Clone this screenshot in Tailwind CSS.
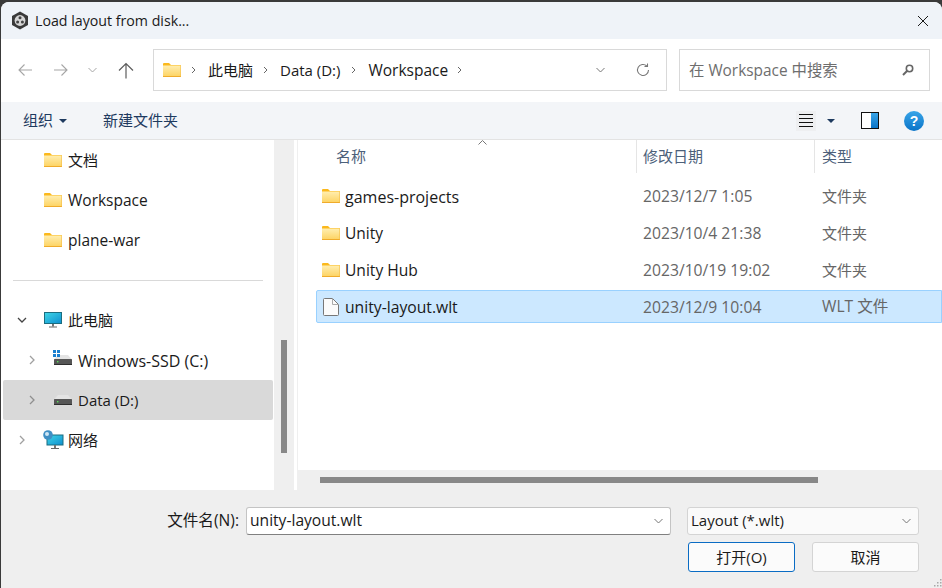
<!DOCTYPE html>
<html lang="zh-CN">
<head>
  <meta charset="UTF-8">
  <title>Load layout from disk...</title>
  <script src="https://cdn.jsdelivr.net/npm/@tailwindcss/browser@4"></script>
</head>
<body class="bg-[#3a3a3a] overflow-hidden font-['Open_Sans','Noto_Sans_CJK_SC',sans-serif] text-[15px] text-[#1a1a1a]">

  <!-- shared icons -->
  <svg width="0" height="0" class="absolute">
    <defs>
      <linearGradient id="folderFill" x1="0" y1="0" x2="0" y2="1">
        <stop offset="0" stop-color="#ffeeb0"/>
        <stop offset="1" stop-color="#fdd25f"/>
      </linearGradient>
      <linearGradient id="screenFill" x1="0" y1="0" x2="1" y2="1">
        <stop offset="0" stop-color="#3fd6e6"/>
        <stop offset="1" stop-color="#0f8fd0"/>
      </linearGradient>
      <linearGradient id="paneFill" x1="0" y1="0" x2="0" y2="1">
        <stop offset="0" stop-color="#39a5e8"/>
        <stop offset="1" stop-color="#0a74c8"/>
      </linearGradient>
      <symbol id="folder" viewBox="0 0 18 14">
        <path d="M0 1a1 1 0 0 1 1-1h5l2 2h10v2H0z" fill="#fbb81c"/>
        <rect x="0" y="2.5" width="18" height="11.5" fill="url(#folderFill)"/>
        <rect x="0" y="13" width="18" height="1" fill="#f0ab2a"/>
        <rect x="17.4" y="2.5" width="0.6" height="11" fill="#f5c04a"/>
      </symbol>
      <symbol id="drive" viewBox="0 0 18 10">
        <path d="M4 0h10l4 4.5H0z" fill="#e4e4e4"/>
        <rect x="0" y="4" width="18" height="6" rx="0.5" fill="#565656"/>
        <rect x="0" y="9" width="18" height="1" fill="#2f2f2f"/>
        <rect x="3" y="6" width="1.4" height="1.4" fill="#5ce05c"/>
      </symbol>
    </defs>
  </svg>

  <div class="w-[942px] h-[588px] pt-[2px] pl-[1px]">
    <div class="w-[941px] h-[586px] rounded-t-lg overflow-hidden flex flex-col bg-white">

      <!-- Title bar -->
      <div class="h-[37px] shrink-0 bg-[#eff3f8] flex items-center pl-[10px]">
        <svg width="18" height="19" viewBox="0 0 18 19" class="shrink-0">
          <path d="M9 .5l8 4.500v9l-8 4.500-8-4.500V5z" fill="#3a3a3a"/>
          <circle cx="9" cy="9.500" r="5.400" fill="#d6d6d6"/>
          <circle cx="9" cy="6.800" r="1.500" fill="#444"/>
          <circle cx="6.600" cy="11" r="1.500" fill="#444"/>
          <circle cx="11.400" cy="11" r="1.500" fill="#444"/>
        </svg>
        <span class="ml-[6px] text-[14.2px]">Load layout from disk...</span>
        <svg width="12" height="12" viewBox="0 0 12 12" class="ml-auto mr-[13px]" fill="none" stroke="#1a1a1a" stroke-width="1">
          <path d="M1 1l10 10M11 1L1 11"/>
        </svg>
      </div>

      <!-- Navigation row -->
      <div class="h-[63px] shrink-0 bg-white flex items-center pl-[16px] pb-[1px]">
        <svg width="16" height="14" viewBox="0 0 16 14" fill="none" stroke="#a6a6a6" stroke-width="1.1"><path d="M15 7H2M7.500 1.500L2 7l5.500 5.500"/></svg>
        <svg width="16" height="14" viewBox="0 0 16 14" fill="none" stroke="#a6a6a6" stroke-width="1.1" class="ml-[20px]"><path d="M1 7h13M8.500 1.500L14 7l-5.500 5.500"/></svg>
        <svg width="9" height="6" viewBox="0 0 9 6" fill="none" stroke="#a6a6a6" stroke-width="1" class="ml-[19px]"><path d="M.5 1l4 4 4-4"/></svg>
        <svg width="16" height="17" viewBox="0 0 16 17" fill="none" stroke="#5c5c5c" stroke-width="1.2" class="ml-[21px]"><path d="M8 16.500V1.500M1 8.500l7-7 7 7"/></svg>

        <div class="ml-[19px] w-[514px] h-[42px] border border-[#d9d9d9] flex items-center pl-[9px]">
          <svg width="18" height="14" viewBox="0 0 18 14" class="shrink-0"><use href="#folder"/></svg>
          <svg width="5" height="8" viewBox="0 0 5 8" fill="none" stroke="#666" stroke-width="1" class="ml-[10px]"><path d="M1 1l3 3-3 3"/></svg>
          <span class="ml-[12px]">此电脑</span>
          <svg width="5" height="8" viewBox="0 0 5 8" fill="none" stroke="#666" stroke-width="1" class="ml-[10px]"><path d="M1 1l3 3-3 3"/></svg>
          <span class="ml-[12px]">Data (D:)</span>
          <svg width="5" height="8" viewBox="0 0 5 8" fill="none" stroke="#666" stroke-width="1" class="ml-[11px]"><path d="M1 1l3 3-3 3"/></svg>
          <span class="ml-[12px] text-[15.5px] pt-[1px]">Workspace</span>
          <svg width="5" height="8" viewBox="0 0 5 8" fill="none" stroke="#666" stroke-width="1" class="ml-[9px]"><path d="M1 1l3 3-3 3"/></svg>
          <svg width="9" height="6" viewBox="0 0 9 6" fill="none" stroke="#777" stroke-width="1" class="ml-auto"><path d="M.5 1l4 4 4-4"/></svg>
          <svg width="14" height="14" viewBox="0 0 14 14" fill="none" stroke="#777" stroke-width="1.1" class="ml-[31px] mr-[16px]"><path d="M12.500 7a5.500 5.500 0 1 1-1.700-4"/><path d="M11.500 .5v3h-3"/></svg>
        </div>

        <div class="ml-[12px] w-[251px] h-[42px] border border-[#d9d9d9] flex items-center pl-[9px] pr-[15px] text-[#6e6e6e]">
          <span class="text-[15.4px] pt-[1px]">在 Workspace 中搜索</span>
          <svg width="12" height="12" viewBox="0 0 12 12" fill="none" stroke="#666" class="ml-auto"><circle cx="7.500" cy="4.500" r="3.200" stroke-width="1.600"/><path d="M5 7l-4 4" stroke-width="2"/></svg>
        </div>
      </div>

      <!-- Toolbar -->
      <div class="h-[38px] shrink-0 bg-[#f3f5f8] border-b border-[#e3e3e3] flex items-center pl-[22px] text-[#1e3a5f]">
        <span>组织</span>
        <svg width="8" height="4" viewBox="0 0 8 4" class="ml-[6px]"><path d="M0 0h8L4 4z" fill="#1e3a5f"/></svg>
        <span class="ml-[36px]">新建文件夹</span>
        <div class="ml-auto flex items-center">
          <div class="w-[20px] h-[20px] bg-[#eeeff1] flex items-center justify-center">
            <svg width="14" height="13" viewBox="0 0 14 13" stroke="#111" stroke-width="1"><path d="M0 .5h14M0 4.500h14M0 8.500h14M0 12.500h14"/></svg>
          </div>
          <svg width="8" height="4" viewBox="0 0 8 4" class="ml-[11px]"><path d="M0 0h8L4 4z" fill="#1e3a5f"/></svg>
          <svg width="18" height="17" viewBox="0 0 18 17" class="ml-[26px]">
            <rect x=".5" y=".5" width="17" height="16" fill="#fff" stroke="#111"/>
            <rect x="10" y="1" width="7" height="15" fill="url(#paneFill)"/>
          </svg>
          <svg width="20" height="20" viewBox="0 0 20 20" class="ml-[25px] mr-[18px]">
            <circle cx="10" cy="10" r="10" fill="url(#paneFill)"/>
            <text x="10" y="15" text-anchor="middle" font-size="14" font-weight="700" fill="#fff" font-family="Liberation Sans">?</text>
          </svg>
        </div>
      </div>

      <!-- Panes -->
      <div class="h-[350px] shrink-0 flex">

        <!-- Navigation tree -->
        <div class="w-[273px] shrink-0 pl-[2px] pr-[1px]">
          <div class="h-[40px] flex items-center pl-[41px] gap-[6px]">
            <svg width="18" height="14" viewBox="0 0 18 14"><use href="#folder"/></svg><span>文档</span>
          </div>
          <div class="h-[40px] flex items-center pl-[41px] gap-[6px]">
            <svg width="18" height="14" viewBox="0 0 18 14"><use href="#folder"/></svg><span class="text-[15.5px] pt-[1px]">Workspace</span>
          </div>
          <div class="h-[40px] flex items-center pl-[41px] gap-[6px]">
            <svg width="18" height="14" viewBox="0 0 18 14"><use href="#folder"/></svg><span class="text-[15.5px] pt-[1px]">plane-war</span>
          </div>
          <div class="h-[40px] flex items-center pl-[10px] pr-[10px]">
            <div class="w-full h-[1px] bg-[#d9d9d9]"></div>
          </div>
          <div class="h-[40px] flex items-center pl-[14px]">
            <svg width="10" height="6" viewBox="0 0 10 6" fill="none" stroke="#444" stroke-width="1.300"><path d="M1 1l4 4 4-4"/></svg>
            <svg width="18" height="16" viewBox="0 0 18 16" class="ml-[17px]">
              <rect x=".5" y=".5" width="17" height="11" fill="url(#screenFill)" stroke="#1b6d80"/>
              <rect x="8" y="12" width="2" height="2.500" fill="#777"/><rect x="5" y="14.500" width="8" height="1" fill="#666"/>
            </svg>
            <span class="ml-[6px]">此电脑</span>
          </div>
          <div class="h-[40px] flex items-center pl-[26px]">
            <svg width="6" height="10" viewBox="0 0 6 10" fill="none" stroke="#a0a0a0" stroke-width="1.300"><path d="M1 1l4 4-4 4"/></svg>
            <div class="relative ml-[19px] w-[18px] h-[10px]">
              <svg width="18" height="10" viewBox="0 0 18 10" class="block"><use href="#drive"/></svg>
              <svg width="7" height="7" viewBox="0 0 7 7" class="absolute -top-[5px] -left-[1px]"><path d="M0 0h3v3H0zM4 0h3v3H4zM0 4h3v3H0zM4 4h3v3H4z" fill="#1a7fd0"/></svg>
            </div>
            <span class="ml-[6px] text-[16px] pt-[1px]">Windows-SSD (C:)</span>
          </div>
          <div class="h-[40px] flex items-center pl-[26px] bg-[#d9d9d9] rounded-[2px]">
            <svg width="6" height="10" viewBox="0 0 6 10" fill="none" stroke="#8f8f8f" stroke-width="1.300"><path d="M1 1l4 4-4 4"/></svg>
            <svg width="18" height="10" viewBox="0 0 18 10" class="ml-[19px]"><use href="#drive"/></svg>
            <span class="ml-[6px]">Data (D:)</span>
          </div>
          <div class="h-[40px] flex items-center pl-[16px]">
            <svg width="6" height="10" viewBox="0 0 6 10" fill="none" stroke="#a0a0a0" stroke-width="1.300"><path d="M1 1l4 4-4 4"/></svg>
            <svg width="21" height="20" viewBox="0 0 21 20" class="ml-[18px]">
              <rect x="4" y="5" width="16" height="10" fill="url(#screenFill)" stroke="#1b6d80"/>
              <rect x="11" y="15" width="2" height="3" fill="#777"/><rect x="8" y="18" width="8" height="1" fill="#666"/>
              <circle cx="5" cy="5" r="4.800" fill="#3f8fc4"/><circle cx="4" cy="4" r="2" fill="#cfe6f5"/>
            </svg>
            <span class="ml-[4px]">网络</span>
          </div>
        </div>

        <!-- Tree scrollbar -->
        <div class="w-[20px] shrink-0 bg-[#efefef] pt-[200px] pl-[7px]">
          <div class="w-[6px] h-[113px] bg-[#888888]"></div>
        </div>
        <div class="w-[4px] shrink-0 bg-white border-r border-[#efefef]"></div>

        <!-- File list -->
        <div class="flex-1 min-w-0 flex flex-col">
          <div class="relative h-[33px] shrink-0 flex items-center text-[#4c607a]">
            <svg width="9" height="5" viewBox="0 0 9 5" fill="none" stroke="#777" class="absolute left-[180px] top-0"><path d="M.5 4.500l4-4 4 4"/></svg>
            <span class="w-[338px] shrink-0 pl-[38px]">名称</span>
            <span class="w-[178px] shrink-0 h-full flex items-center pl-[6px] border-l border-[#e5e5e5]">修改日期</span>
            <span class="flex-1 h-full flex items-center pl-[7px] border-l border-[#e5e5e5]">类型</span>
          </div>

          <div class="flex-1 flex flex-col gap-[4px] pt-[6px] pl-[18px]">
            <div class="h-[33px] flex items-center border border-transparent">
              <svg width="18" height="14" viewBox="0 0 18 14" class="ml-[5px] shrink-0"><use href="#folder"/></svg>
              <span class="w-[303px] shrink-0 pl-[5px] text-[16px] pt-[2px]">games-projects</span>
              <span class="w-[179px] shrink-0 text-[#666] text-[15.7px] pt-[2px]">2023/12/7 1:05</span>
              <span class="text-[#666] pt-[2px]">文件夹</span>
            </div>
            <div class="h-[33px] flex items-center border border-transparent">
              <svg width="18" height="14" viewBox="0 0 18 14" class="ml-[5px] shrink-0"><use href="#folder"/></svg>
              <span class="w-[303px] shrink-0 pl-[5px] text-[15.5px] pt-[2px]">Unity</span>
              <span class="w-[179px] shrink-0 text-[#666] text-[15.7px] pt-[2px]">2023/10/4 21:38</span>
              <span class="text-[#666] pt-[2px]">文件夹</span>
            </div>
            <div class="h-[33px] flex items-center border border-transparent">
              <svg width="18" height="14" viewBox="0 0 18 14" class="ml-[5px] shrink-0"><use href="#folder"/></svg>
              <span class="w-[303px] shrink-0 pl-[5px] text-[15.6px] pt-[2px]">Unity Hub</span>
              <span class="w-[179px] shrink-0 text-[#666] text-[15.7px] pt-[2px]">2023/10/19 19:02</span>
              <span class="text-[#666] pt-[2px]">文件夹</span>
            </div>
            <div class="h-[33px] flex items-center border border-[#99d1ff] bg-[#cce8ff] rounded-l-[2px]">
              <svg width="16" height="18" viewBox="0 0 16 18" class="ml-[6px] shrink-0 mr-[1px]" fill="#fbfbfb" stroke="#777"><path d="M.5 1.500a1 1 0 0 1 1-1h8l6 6v10a1 1 0 0 1-1 1h-13a1 1 0 0 1-1-1z"/><path d="M9.500 .5v6h6" fill="none" stroke="#aaa"/></svg>
              <span class="w-[303px] shrink-0 pl-[5px] text-[15.7px] pt-[2px]">unity-layout.wlt</span>
              <span class="w-[179px] shrink-0 text-[#666] text-[15.7px] pt-[2px]">2023/12/9 10:04</span>
              <span class="text-[#666] text-[15.6px] pt-[1px]">WLT 文件</span>
            </div>
          </div>

          <!-- List scrollbar -->
          <div class="h-[20px] shrink-0 bg-[#efefef] pt-[7px] pl-[22px]">
            <div class="w-[498px] h-[6px] bg-[#888888]"></div>
          </div>
        </div>
      </div>

      <!-- Footer -->
      <div class="flex-1 bg-[#efefef] relative flex flex-col items-end pt-[17px] pr-[23px]">
        <div class="flex items-center">
          <span class="mr-[7px] text-[15.6px]">文件名(N):</span>
          <div class="w-[425px] h-[28px] bg-white border border-[#c4c4c4] border-b-[#808080] rounded-[3px] flex items-center pl-[3px] pr-[7px]">
            <span class="text-[15.6px]">unity-layout.wlt</span>
            <svg width="9" height="6" viewBox="0 0 9 6" fill="none" stroke="#777" class="ml-auto"><path d="M.5 1l4 4 4-4"/></svg>
          </div>
          <div class="ml-[16px] w-[232px] h-[28px] bg-[#fafafa] border border-[#d4d4d4] rounded-[3px] flex items-center pl-[3px] pr-[7px]">
            <span class="pb-[1px]">Layout (*.wlt)</span>
            <svg width="9" height="6" viewBox="0 0 9 6" fill="none" stroke="#777" class="ml-auto"><path d="M.5 1l4 4 4-4"/></svg>
          </div>
        </div>
        <div class="flex mt-[7px] gap-[17px]">
          <div class="w-[107px] h-[30px] bg-[#fbfbfb] border border-[#0a6cc4] rounded-[3px] flex items-center justify-center">打开(O)</div>
          <div class="w-[107px] h-[30px] bg-[#fbfbfb] border border-[#d4d4d4] rounded-[3px] flex items-center justify-center">取消</div>
        </div>
        <svg width="10" height="10" viewBox="0 0 10 10" class="absolute right-0 bottom-0" fill="#a8a8a8">
          <path d="M8 1h1.500v1.500H8zM5 4h1.500v1.500H5zM8 4h1.500v1.500H8zM2 7h1.500v1.500H2zM5 7h1.500v1.500H5zM8 7h1.500v1.500H8z"/>
        </svg>
      </div>
    </div>
  </div>
</body>
</html>
